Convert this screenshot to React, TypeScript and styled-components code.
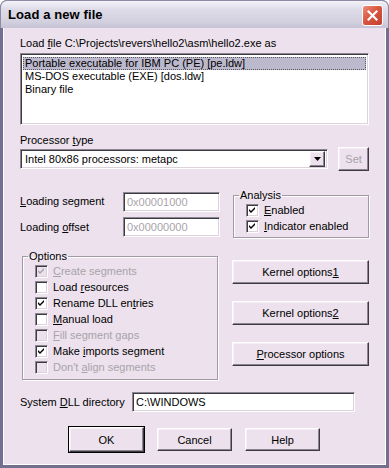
import React from 'react';
import styled, { createGlobalStyle, css } from 'styled-components';

const GlobalStyle = createGlobalStyle`
  html, body {
    margin: 0;
    padding: 0;
    background: #ffffff;
  }
  body {
    font-family: 'Liberation Sans', Arial, sans-serif;
    font-size: 11px;
    color: #000000;
  }
`;

const face = '#ECE1EC';

const sunken = css`
  box-sizing: border-box;
  border: 1px solid;
  border-color: #8C8692 #ffffff #ffffff #8C8692;
  box-shadow: inset 1px 1px #3E3A42, inset -1px -1px #DCD2DC;
`;

const raised = css`
  box-sizing: border-box;
  border: 1px solid;
  border-color: #ffffff #3E3A42 #3E3A42 #ffffff;
  box-shadow: inset -1px -1px #8C8692, inset 1px 1px #F6F0F6;
`;

const Window = styled.div`
  width: 389px;
  height: 468px;
  box-sizing: border-box;
  display: flex;
  flex-direction: column;
  background: #736F8E;
  border-radius: 7px 7px 0 0;
  padding: 0 3px 3px 3px;
  overflow: hidden;
`;

const TitleBar = styled.div`
  height: 28px;
  margin: 0 -3px;
  box-sizing: border-box;
  display: flex;
  align-items: center;
  justify-content: space-between;
  padding: 0 5px 1px 7px;
  border-radius: 7px 7px 0 0;
  border: 1px solid #8E8AA6;
  border-bottom: none;
  background: linear-gradient(#F4F3F8 0%, #DEDCE8 30%, #D3D1DF 75%, #C6C4D4 100%);
`;

const Title = styled.span`
  font: bold 13px 'Liberation Sans', Arial, sans-serif;
  color: #000000;
  letter-spacing: 0.1px;
`;

const CloseButton = styled.div`
  width: 21px;
  height: 21px;
  box-sizing: border-box;
  border-radius: 3px;
  border: 1px solid #ffffff;
  background: linear-gradient(135deg, #EC8E7C 0%, #DA5640 45%, #C43E2C 100%);
  display: flex;
  align-items: center;
  justify-content: center;
  margin-top: 2px;
`;

const Client = styled.div`
  flex: 1;
  background: ${face};
  box-shadow: inset 1px 0 #ffffff, inset -1px -1px #ffffff;
  padding: 9px 17px 0 17px;
  display: flex;
  flex-direction: column;
`;

const Label = styled.div<{ $disabled?: boolean }>`
  height: 13px;
  line-height: 13px;
  white-space: nowrap;
  color: ${({ $disabled }) => ($disabled ? '#A9A3AB' : '#000000')};
`;

const ListBox = styled.div`
  ${sunken};
  background: #ffffff;
  height: 72px;
  margin-top: 3px;
  padding: 3px 2px;
`;

const ListItem = styled.div<{ $selected?: boolean }>`
  height: 13px;
  line-height: 13px;
  padding-left: 2px;
  white-space: nowrap;
  background: ${({ $selected }) => ($selected ? '#BCB9CC' : 'transparent')};
  outline: ${({ $selected }) => ($selected ? '1px dotted #5A5660' : 'none')};
  outline-offset: -1px;
`;

const ProcessorLabel = styled(Label)`
  margin-top: 9px;
`;

const ComboRow = styled.div`
  display: flex;
  align-items: center;
  gap: 10px;
`;

const Combo = styled.div`
  ${sunken};
  width: 310px;
  height: 20px;
  background: #ffffff;
  display: flex;
  align-items: center;
  justify-content: space-between;
  padding: 0 2px 0 4px;
`;

const DropButton = styled.div`
  ${raised};
  width: 16px;
  height: 16px;
  background: ${face};
  display: flex;
  align-items: center;
  justify-content: center;
`;

const Button = styled.div<{ $width?: number; $height?: number; $default?: boolean; $disabled?: boolean }>`
  ${raised};
  width: ${({ $width }) => $width ?? 75}px;
  height: ${({ $height }) => $height ?? 23}px;
  background: ${face};
  display: flex;
  align-items: center;
  justify-content: center;
  white-space: nowrap;
  color: ${({ $disabled }) => ($disabled ? '#A9A3AB' : '#000000')};
  ${({ $default }) =>
    $default &&
    css`
      outline: 1px solid #000000;
      outline-offset: 0;
    `}
`;

const Middle = styled.div`
  display: flex;
  justify-content: space-between;
  margin-top: 18px;
  height: 49px;
`;

const LoadFields = styled.div`
  display: grid;
  grid-template-columns: 103px 97px;
  row-gap: 4px;
  align-items: center;
  margin-top: 2px;
`;

const TextField = styled.div<{ $width?: number; $disabled?: boolean }>`
  ${sunken};
  width: ${({ $width }) => ($width ? `${$width}px` : '100%')};
  height: 20px;
  line-height: 18px;
  padding: 0 3px;
  background: #ffffff;
  white-space: nowrap;
  color: ${({ $disabled }) => ($disabled ? '#A9A3AB' : '#000000')};
`;

const GroupBox = styled.fieldset<{ $width: number; $height: number; $inset?: number }>`
  margin: 0 0 0 ${({ $inset }) => $inset ?? 0}px;
  box-sizing: border-box;
  width: ${({ $width }) => $width}px;
  height: ${({ $height }) => $height}px;
  border: 1px solid #A09AA4;
  box-shadow: 1px 1px #ffffff, inset 1px 1px #ffffff;
  padding: 0 0 0 12px;
  display: flex;
  flex-direction: column;

  legend {
    padding: 0 1px;
    margin-left: -7px;
    line-height: 13px;
  }
`;

const CheckRow = styled.div<{ $disabled?: boolean }>`
  display: flex;
  align-items: center;
  gap: 5px;
  height: 16px;
  white-space: nowrap;
  color: ${({ $disabled }) => ($disabled ? '#A9A3AB' : '#000000')};
`;

const Box = styled.div<{ $disabled?: boolean }>`
  ${sunken};
  width: 13px;
  height: 13px;
  flex: none;
  background: ${({ $disabled }) => ($disabled ? face : '#ffffff')};
  display: flex;
  align-items: center;
  justify-content: center;
`;

const Lower = styled.div`
  display: flex;
  justify-content: space-between;
  margin-top: 12px;
`;

const SideButtons = styled.div`
  display: flex;
  flex-direction: column;
  gap: 17px;
  padding-top: 10px;
`;

const DllRow = styled.div`
  display: flex;
  align-items: center;
  margin-top: 12px;
`;

const DllLabel = styled(Label)`
  width: 112px;
`;

const Footer = styled.div`
  display: flex;
  align-items: center;
  gap: 13px;
  padding-left: 49px;
  margin-top: 15px;
`;

const U = styled.span`
  text-decoration: underline;
`;

const Check = ({ checked, disabled }: { checked?: boolean; disabled?: boolean }) => (
  <Box $disabled={disabled}>
    {checked && (
      <svg width="7" height="7" viewBox="0 0 7 7">
        <path
          d="M0 2 L2 4 L6 0 L6 2 L2 6 L0 4 Z"
          fill={disabled ? '#A9A3AB' : '#000000'}
        />
      </svg>
    )}
  </Box>
);

type Opt = { pre: string; key: string; post: string; checked?: boolean; disabled?: boolean };

const options: Opt[] = [
  { pre: '', key: 'C', post: 'reate segments', checked: true, disabled: true },
  { pre: 'Load ', key: 'r', post: 'esources' },
  { pre: 'Rename DLL en', key: 't', post: 'ries', checked: true },
  { pre: '', key: 'M', post: 'anual load' },
  { pre: '', key: 'F', post: 'ill segment gaps', disabled: true },
  { pre: 'Make ', key: 'i', post: 'mports segment', checked: true },
  { pre: "Don't ", key: 'a', post: 'lign segments', disabled: true },
];

const App = () => {
  return (
    <>
      <GlobalStyle />
      <Window>
        <TitleBar>
          <Title>Load a new file</Title>
          <CloseButton>
            <svg width="11" height="11" viewBox="0 0 11 11">
              <path d="M1.5 1.5 L9.5 9.5 M9.5 1.5 L1.5 9.5" stroke="#ffffff" strokeWidth="2.2" strokeLinecap="square" />
            </svg>
          </CloseButton>
        </TitleBar>
        <Client>
          <Label>
            Load <U>f</U>ile C:\Projects\revers\hello2\asm\hello2.exe as
          </Label>
          <ListBox>
            <ListItem $selected>Portable executable for IBM PC (PE) [pe.ldw]</ListItem>
            <ListItem>MS-DOS executable (EXE) [dos.ldw]</ListItem>
            <ListItem>Binary file</ListItem>
          </ListBox>
          <ProcessorLabel>
            Processor <U>t</U>ype
          </ProcessorLabel>
          <ComboRow>
            <Combo>
              <span>Intel 80x86 processors: metapc</span>
              <DropButton>
                <svg width="7" height="4" viewBox="0 0 7 4">
                  <path d="M0 0 H7 L3.5 4 Z" fill="#000000" />
                </svg>
              </DropButton>
            </Combo>
            <Button $width={31} $height={24} $disabled>
              Set
            </Button>
          </ComboRow>
          <Middle>
            <LoadFields>
              <Label>
                <U>L</U>oading segment
              </Label>
              <TextField $disabled>0x00001000</TextField>
              <Label>
                Loading <U>o</U>ffset
              </Label>
              <TextField $disabled>0x00000000</TextField>
            </LoadFields>
            <GroupBox $width={136} $height={49}>
              <legend>Analysis</legend>
              <CheckRow>
                <Check checked />
                <span>
                  <U>E</U>nabled
                </span>
              </CheckRow>
              <CheckRow>
                <Check checked />
                <span>
                  <U>I</U>ndicator enabled
                </span>
              </CheckRow>
            </GroupBox>
          </Middle>
          <Lower>
            <GroupBox $width={196} $height={130} $inset={2}>
              <legend>Options</legend>
              {options.map((o) => (
                <CheckRow key={o.post} $disabled={o.disabled}>
                  <Check checked={o.checked} disabled={o.disabled} />
                  <span>
                    {o.pre}
                    <U>{o.key}</U>
                    {o.post}
                  </span>
                </CheckRow>
              ))}
            </GroupBox>
            <SideButtons>
              <Button $width={137} $height={24}>
                Kernel options<U>1</U>
              </Button>
              <Button $width={137} $height={24}>
                Kernel options<U>2</U>
              </Button>
              <Button $width={137} $height={24}>
                <U>P</U>rocessor options
              </Button>
            </SideButtons>
          </Lower>
          <DllRow>
            <DllLabel>
              System <U>D</U>LL directory
            </DllLabel>
            <TextField $width={223}>C:\WINDOWS</TextField>
          </DllRow>
          <Footer>
            <Button $default $height={25}>OK</Button>
            <Button $height={23}>Cancel</Button>
            <Button $height={23}>Help</Button>
          </Footer>
        </Client>
      </Window>
    </>
  );
};

export default App;
